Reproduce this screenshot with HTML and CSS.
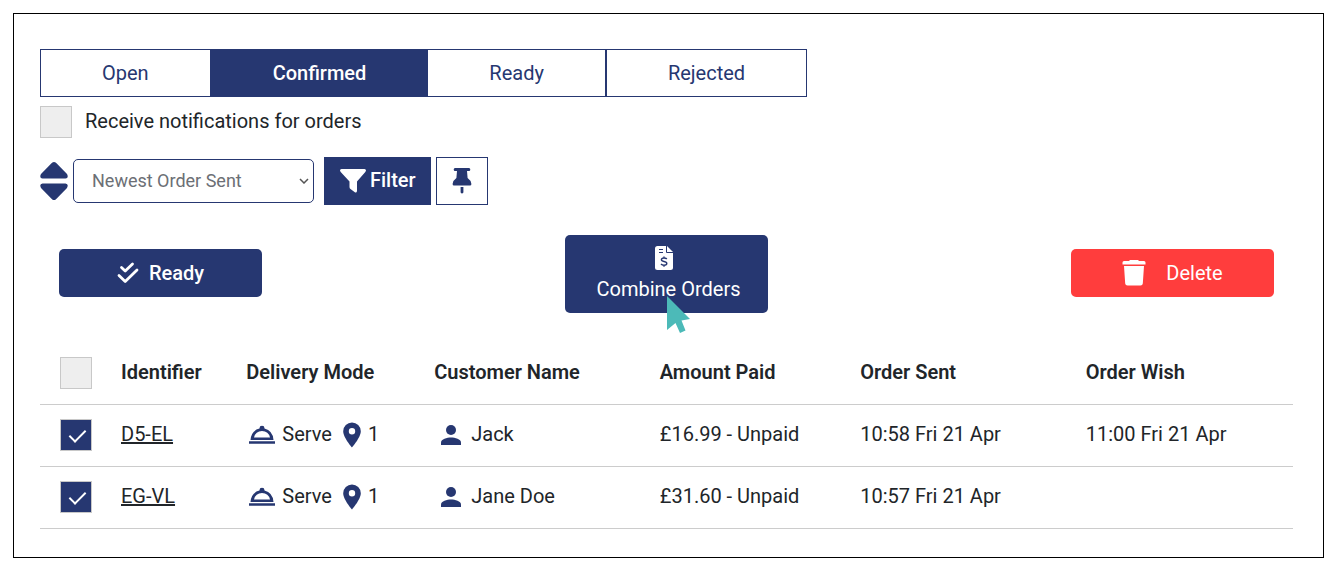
FILE: index.html
```html
<!DOCTYPE html>
<html lang="en">
<head>
    <meta charset="UTF-8">
    <meta name="viewport" content="width=device-width, initial-scale=1">
    <title>Orders</title>
    <link rel="stylesheet" href="styles.css">
</head>
<body>
    <main class="orders">
        <nav class="tabs">
            <button class="tab" type="button">Open</button>
            <button class="tab active" type="button">Confirmed</button>
            <button class="tab" type="button">Ready</button>
            <button class="tab" type="button">Rejected</button>
        </nav>

        <div class="notify">
            <input class="check" type="checkbox" id="notify">
            <label for="notify">Receive notifications for orders</label>
        </div>

        <div class="toolbar">
            <button class="sort" type="button" aria-label="Change sort direction">
                <svg width="28" height="40" viewBox="0 0 28 40">
                    <path d="M12 1.800Q14 0 16 1.800L27 13Q29 17 25.500 17.500H2.500Q-1 17 1 13ZM12 38.200Q14 40 16 38.200L27 27Q29 23 25.500 22.500H2.500Q-1 23 1 27Z"/>
                </svg>
            </button>
            <select class="sort-by" aria-label="Sort by">
                <option>Newest Order Sent</option>
                <option>Oldest Order Sent</option>
            </select>
            <button class="filter" type="button">
                <svg width="26" height="24" viewBox="0 0 26 24">
                    <path d="M1.500 0H24.500Q27 .5 25.300 3L17 12.500V22Q16.500 24.500 14.500 23L10.500 20Q9.500 19.300 9.500 18V12.500L.7 3Q-1 .5 1.500 0Z"/>
                </svg>
                <span>Filter</span>
            </button>
            <button class="pin" type="button" aria-label="Pin">
                <svg width="20" height="26" viewBox="0 0 20 26">
                    <path d="M3 0H17Q18.300 0 18.300 1.500T17 3H15L15.600 10Q19 12.300 19.400 16Q19.400 17.500 18 17.500H2Q.6 17.500 .6 16Q1 12.300 4.400 10L5 3H3Q1.700 3 1.700 1.500T3 0ZM8.600 19H11.400V24.500Q10 26.500 8.600 24.500Z"/>
                </svg>
            </button>
        </div>

        <div class="actions">
            <button class="action ready" type="button">
                <svg width="22" height="22" viewBox="0 0 22 22">
                    <path fill="none" stroke="currentColor" stroke-width="2.800" stroke-linecap="round" stroke-linejoin="round" d="M4.500 5.500L8.200 9L15.500 2M2 13.500L8.200 19.500L20 8"/>
                </svg>
                Ready
            </button>
            <div class="combine-wrap">
                <button class="action combine" type="button">
                    <svg width="18" height="24" viewBox="0 0 18 24">
                        <path fill="#fff" d="M2.500 0H12L18 6V21.500Q18 24 15.500 24H2.500Q0 24 0 21.500V2.500Q0 0 2.500 0Z"/>
                        <path fill="none" stroke="#263771" d="M11.500 0V6.500H18M4 3.500H8M4 6.500H8"/>
                        <path fill="none" stroke="#263771" stroke-width="1.400" d="M11.800 13Q11 12 9 12Q6.400 12 6.400 13.800Q6.400 15 9 15.500Q11.800 16 11.800 17.500Q11.800 19.200 9 19.200Q7 19.200 6 18M9 10.500V12M9 19V20.800"/>
                    </svg>
                    <span>Combine Orders</span>
                </button>
                <svg class="pointer" width="24" height="38" viewBox="0 0 24 38">
                    <path d="M0 0L23 23L14.500 24.500L18.500 34.500L13 37L8.500 27L0 34Z"/>
                </svg>
            </div>
            <button class="action delete" type="button">
                <svg width="24" height="26" viewBox="0 0 24 26">
                    <path d="M8 0H16L17 1H22Q23.500 1 23.500 2.500V4.500H.5V2.500Q.5 1 2 1H7ZM2 6H22L20.800 23.500Q20.600 25.500 18.500 25.500H5.500Q3.400 25.500 3.200 23.500Z"/>
                </svg>
                Delete
            </button>
        </div>

        <table class="list">
            <thead>
                <tr>
                    <th class="col-check"><input class="check" type="checkbox" aria-label="Select all orders"></th>
                    <th class="col-id">Identifier</th>
                    <th class="col-mode">Delivery Mode</th>
                    <th class="col-name">Customer Name</th>
                    <th class="col-paid">Amount Paid</th>
                    <th class="col-sent">Order Sent</th>
                    <th>Order Wish</th>
                </tr>
            </thead>
            <tbody>
                <tr>
                    <td class="col-check"><input class="check" type="checkbox" aria-label="Select D5-EL" checked></td>
                    <td><a href="#">D5-EL</a></td>
                    <td>
                        <div class="mode">
                            <svg width="26" height="20" viewBox="0 0 26 20">
                                <path fill-rule="evenodd" d="M1.500 15Q2.300 5.500 10.500 3.600Q10.300 .8 13 .8T15.500 3.600Q23.700 5.500 24.500 15ZM5 12.500H21Q19.500 6 13 6T5 12.500ZM0 16.200H26V18.700H0Z"/>
                            </svg>
                            <span>Serve</span>
                            <svg class="place" width="18" height="26" viewBox="0 0 18 26">
                                <path fill-rule="evenodd" d="M9 .5A8.800 8.800 0 0 0 .2 9.300C.2 15.500 9 25.500 9 25.500S17.800 15.500 17.800 9.300A8.800 8.800 0 0 0 9 .5ZM9 6A3.200 3.200 0 1 1 9 12.400A3.200 3.200 0 0 1 9 6Z"/>
                            </svg>
                            <span>1</span>
                        </div>
                    </td>
                    <td>
                        <div class="customer">
                            <svg width="20" height="20" viewBox="0 0 20 20">
                                <circle cx="10" cy="5" r="5"/>
                                <path d="M0 20V17.500C0 14 6 12.500 10 12.500S20 14 20 17.500V20Z"/>
                            </svg>
                            <span>Jack</span>
                        </div>
                    </td>
                    <td>£16.99 - Unpaid</td>
                    <td>10:58 Fri 21 Apr</td>
                    <td>11:00 Fri 21 Apr</td>
                </tr>
                <tr>
                    <td class="col-check"><input class="check" type="checkbox" aria-label="Select EG-VL" checked></td>
                    <td><a href="#">EG-VL</a></td>
                    <td>
                        <div class="mode">
                            <svg width="26" height="20" viewBox="0 0 26 20">
                                <path fill-rule="evenodd" d="M1.500 15Q2.300 5.500 10.500 3.600Q10.300 .8 13 .8T15.500 3.600Q23.700 5.500 24.500 15ZM5 12.500H21Q19.500 6 13 6T5 12.500ZM0 16.200H26V18.700H0Z"/>
                            </svg>
                            <span>Serve</span>
                            <svg class="place" width="18" height="26" viewBox="0 0 18 26">
                                <path fill-rule="evenodd" d="M9 .5A8.800 8.800 0 0 0 .2 9.300C.2 15.500 9 25.500 9 25.500S17.800 15.500 17.800 9.300A8.800 8.800 0 0 0 9 .5ZM9 6A3.200 3.200 0 1 1 9 12.400A3.200 3.200 0 0 1 9 6Z"/>
                            </svg>
                            <span>1</span>
                        </div>
                    </td>
                    <td>
                        <div class="customer">
                            <svg width="20" height="20" viewBox="0 0 20 20">
                                <circle cx="10" cy="5" r="5"/>
                                <path d="M0 20V17.500C0 14 6 12.500 10 12.500S20 14 20 17.500V20Z"/>
                            </svg>
                            <span>Jane Doe</span>
                        </div>
                    </td>
                    <td>£31.60 - Unpaid</td>
                    <td>10:57 Fri 21 Apr</td>
                    <td></td>
                </tr>
            </tbody>
        </table>
    </main>
</body>
</html>
```
FILE: styles.css
```css
* {
    box-sizing: border-box;
}
body {
    margin: 0;
    padding: 13px 9px 7px 13px;
    font-family: Roboto, Arial, sans-serif;
    font-size: 20px;
    line-height: 24px;
    color: #212529;
    background-color: #fff;
}
.orders {
    padding: 35px 30px 28px 26px;
    border: 1px solid #000;
}
button,
select {
    font-family: inherit;
    font-size: inherit;
    line-height: inherit;
    cursor: pointer;
}
svg {
    flex: none;
    fill: currentColor;
}

/* Tabs */
.tabs {
    display: flex;
}
.tab {
    height: 48px;
    padding: 0 61px 1px 61px;
    border: 1px solid #263771;
    background-color: #fff;
    color: #263771;
}
.tab.active {
    padding: 0 60px 1px 61px;
    background-color: #263771;
    color: #fff;
    font-weight: 500;
}

/* Checkboxes */
.check {
    appearance: none;
    display: grid;
    place-items: center;
    width: 32px;
    height: 32px;
    margin: 0;
    border: 1px solid #c8c8c8;
    background-color: #eee;
    cursor: pointer;
}
.check:checked {
    background-color: #263771;
}
.check:checked::before {
    content: "";
    width: 7px;
    height: 14px;
    margin: 0 0 2px 2px;
    border: solid #fff;
    border-width: 0 2px 2px 0;
    transform: rotate(45deg);
}
.notify {
    display: flex;
    gap: 13px;
    margin-top: 9px;
}
.notify label {
    padding-top: 3px;
}

/* Sorting and filters */
.toolbar {
    display: flex;
    align-items: center;
    margin-top: 19px;
}
.sort {
    display: flex;
    padding: 0;
    border: none;
    background: none;
    color: #263771;
}
.sort-by {
    appearance: none;
    width: 241px;
    height: 44px;
    margin: 0 10px 0 5px;
    padding: 0 18px;
    border: 1px solid #263771;
    border-radius: 5px;
    background: #fff url("data:image/svg+xml,%3Csvg xmlns='http://www.w3.org/2000/svg' width='10' height='6' fill='none' stroke='%23555' stroke-width='1.500'%3E%3Cpath d='M1 1l4 4 4-4'/%3E%3C/svg%3E") no-repeat right 4px center;
    color: #6c6f75;
    font-size: 18px;
}
.filter {
    display: flex;
    align-items: center;
    gap: 4px;
    height: 48px;
    padding: 0 15px 0 16px;
    border: none;
    background-color: #263771;
    color: #fff;
    font-weight: 500;
}
.filter span {
    padding-bottom: 2px;
}
.pin {
    display: flex;
    align-items: center;
    justify-content: center;
    width: 52px;
    height: 48px;
    margin-left: 5px;
    padding: 0;
    border: 1px solid #263771;
    background-color: #fff;
    color: #263771;
}

/* Bulk actions */
.actions {
    display: flex;
    align-items: center;
    justify-content: space-between;
    margin-top: 30px;
    padding: 0 19px;
}
.action {
    display: flex;
    align-items: center;
    justify-content: center;
    gap: 10px;
    width: 203px;
    height: 48px;
    padding: 0;
    border: none;
    border-radius: 5px;
    background-color: #263771;
    color: #fff;
}
.ready,
.delete {
    margin-bottom: 2px;
}
.ready {
    font-weight: 500;
}
.delete {
    gap: 20px;
    background-color: #ff3d3d;
}
.combine-wrap {
    position: relative;
}
.combine {
    flex-direction: column;
    gap: 7px;
    height: 78px;
    padding-bottom: 2px;
}
.combine svg {
    margin-right: 6px;
}
.combine span {
    padding-left: 4px;
}
.pointer {
    position: absolute;
    top: 61px;
    left: 102px;
    color: #4cbab8;
}

/* Orders table */
.list {
    width: 100%;
    margin-top: 29px;
    border-collapse: collapse;
    table-layout: fixed;
}
.list th,
.list td {
    height: 62px;
    padding: 0 0 3px;
    border-bottom: 1px solid #ccc;
    text-align: left;
}
.list th {
    padding-bottom: 1px;
    font-weight: 600;
}
.list .col-check {
    width: 81px;
    padding: 0 0 0 20px;
}
.col-id {
    width: 10%;
}
.col-mode {
    width: 15%;
}
.col-name {
    width: 18%;
}
.col-paid {
    width: 16%;
}
.col-sent {
    width: 18%;
}
.list a {
    color: inherit;
}
.mode,
.customer {
    display: flex;
    align-items: center;
}
.mode {
    gap: 7px;
    padding-left: 3px;
}
.mode .place {
    margin-left: 4px;
}
.customer {
    gap: 10px;
    padding-left: 7px;
}
.mode svg,
.customer svg {
    margin-top: 2px;
    color: #263771;
}
```
